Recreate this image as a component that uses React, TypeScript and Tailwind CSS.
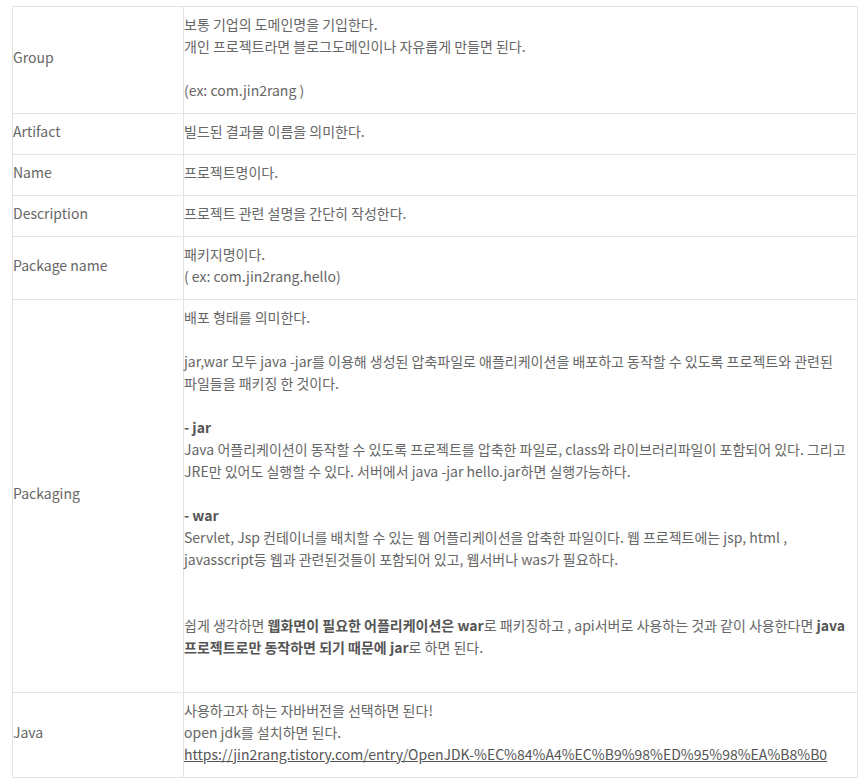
type Piece = string | { b: string };
type Line = Piece[];

const L = (...p: Piece[]): Line => p;
const B = (b: string) => ({ b });

const Lines = ({ lines }: { lines: Line[] }) => (
  <>
    {lines.map((line, i) => (
      <div key={i} className="h-[22px] whitespace-nowrap">
        {line.map((p, j) =>
          typeof p === "string" ? (
            <span key={j}>{p}</span>
          ) : (
            <b key={j} className="font-bold text-[#555]">
              {p.b}
            </b>
          )
        )}
      </div>
    ))}
  </>
);

const rows: { label: string; lines: Line[]; link?: string }[] = [
  {
    label: "Group",
    lines: [
      L("보통 기업의 도메인명을 기입한다."),
      L("개인 프로젝트라면 블로그도메인이나 자유롭게 만들면 된다."),
      L(),
      L("(ex: com.jin2rang )"),
    ],
  },
  { label: "Artifact", lines: [L("빌드된 결과물 이름을 의미한다.")] },
  { label: "Name", lines: [L("프로젝트명이다.")] },
  { label: "Description", lines: [L("프로젝트 관련 설명을 간단히 작성한다.")] },
  {
    label: "Package name",
    lines: [L("패키지명이다."), L("( ex: com.jin2rang.hello)")],
  },
  {
    label: "Packaging",
    lines: [
      L("배포 형태를 의미한다."),
      L(),
      L(
        "jar,war 모두 java -jar를 이용해 생성된 압축파일로 애플리케이션을 배포하고 동작할 수 있도록 프로젝트와 관련된"
      ),
      L("파일들을 패키징 한 것이다."),
      L(),
      L(B("- jar")),
      L(
        "Java 어플리케이션이 동작할 수 있도록 프로젝트를 압축한 파일로, class와 라이브러리파일이 포함되어 있다. 그리고"
      ),
      L("JRE만 있어도 실행할 수 있다. 서버에서 java -jar hello.jar하면 실행가능하다."),
      L(),
      L(B("- war")),
      L(
        "Servlet, Jsp 컨테이너를 배치할 수 있는 웹 어플리케이션을 압축한 파일이다. 웹 프로젝트에는 jsp, html ,"
      ),
      L("javasscript등 웹과 관련된것들이 포함되어 있고, 웹서버나 was가 필요하다."),
      L(),
      L(),
      L(
        "쉽게 생각하면 ",
        B("웹화면이 필요한 어플리케이션은 war"),
        "로 패키징하고 , api서버로 사용하는 것과 같이 사용한다면 ",
        B("java")
      ),
      L(B("프로젝트로만 동작하면 되기 때문에 jar"), "로 하면 된다."),
      L(),
    ],
  },
  {
    label: "Java",
    lines: [L("사용하고자 하는 자바버전을 선택하면 된다!"), L("open jdk를 설치하면 된다.")],
    link: "https://jin2rang.tistory.com/entry/OpenJDK-%EC%84%A4%EC%B9%98%ED%95%98%EA%B8%B0",
  },
];

export default function App() {
  return (
    <div className="min-h-screen bg-white pl-3 pt-1.5 font-['Noto_Sans_CJK_KR',sans-serif] text-[14px] leading-[22px] text-[#666]">
      <table className="w-[846px] table-fixed border-collapse">
        <colgroup>
          <col className="w-[171px]" />
          <col />
        </colgroup>
        <tbody>
          {rows.map((r) => (
            <tr key={r.label}>
              <td className="border border-[#e3e3e3] pt-[6px] pb-[12px] align-middle">{r.label}</td>
              <td className="border border-[#e3e3e3] pt-[6px] pb-[12px] align-middle">
                <Lines lines={r.lines} />
                {r.link && (
                  <div className="h-[22px] whitespace-nowrap">
                    <a href={r.link} className="text-[#555] underline">
                      {r.link}
                    </a>
                  </div>
                )}
              </td>
            </tr>
          ))}
        </tbody>
      </table>
    </div>
  );
}
